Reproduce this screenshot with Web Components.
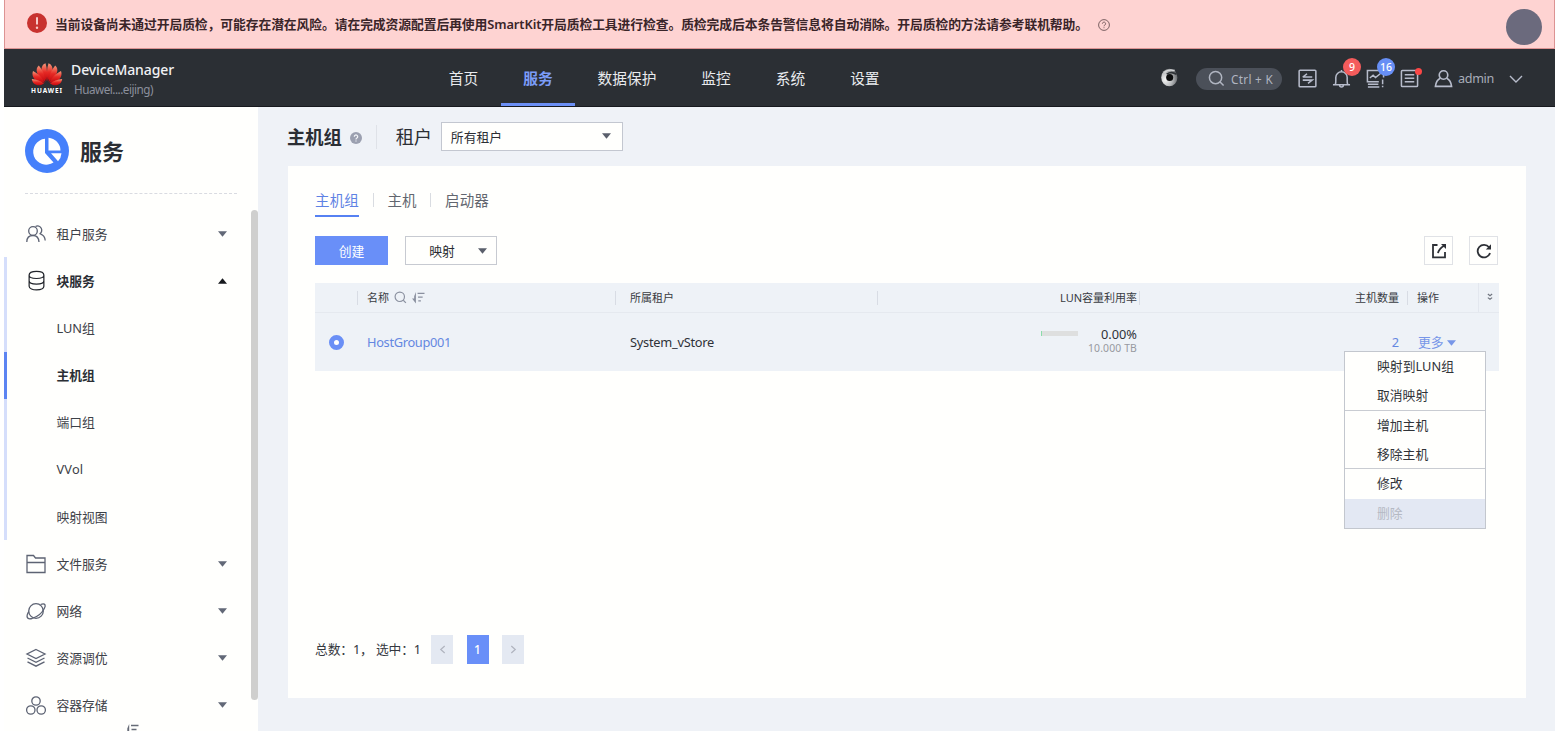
<!DOCTYPE html>
<html lang="zh-CN">
<head>
<meta charset="utf-8">
<title>DeviceManager</title>
<style>
html,body{margin:0;height:100%;background:#fff;overflow:hidden}
body{font-family:"Noto Sans","Noto Sans CJK SC",sans-serif;font-size:12.8px;color:#2e3138}
</style>
</head>
<body>
<device-app></device-app>
<script>
const define = (name, html, init) => {
  const t = document.createElement('template');
  t.innerHTML = html;
  customElements.define(name, class extends HTMLElement {
    connectedCallback() {
      if (this.shadowRoot) return;
      this.attachShadow({mode: 'open'}).append(t.content.cloneNode(true));
      if (init) init.call(this, this.shadowRoot);
    }
  });
};

/* Icon set: <ui-icon name size> */
const icons = {
  alert: ['0 0 20 20', '<circle cx="10" cy="10" r="10" fill="#c8322f" stroke="none"/><path d="M10 4.300v7.200" stroke="#f7c9c8" stroke-width="2"/><circle cx="10" cy="14.700" r="1.200" fill="#f7c9c8" stroke="none"/>'],
  help: ['0 0 12 12', '<circle cx="6" cy="6" r="5.4" fill="none" stroke="#6d5557" stroke-width=".9"/><path d="M4.4 4.7a1.6 1.6 0 1 1 2.5 1.3C6.200 6.400 6 6.700 6 7.300M6 8.300v.9" fill="none" stroke="#6d5557" stroke-width=".9"/>'],
  helpfill: ['0 0 12 12', '<circle cx="6" cy="6" r="6" fill="#9ba0b0" stroke="none"/><path d="M4.300 4.700a1.700 1.700 0 1 1 2.600 1.400C6.200 6.500 6 6.700 6 7.400M6 8.400v1.200" fill="none" stroke="#f4f6fa" stroke-width="1.200"/>'],
  eye: ['0 0 20 20', '<defs><radialGradient id="g" cx=".25" cy=".62" r=".85"><stop offset="0" stop-color="#f6f6f6"/><stop offset=".5" stop-color="#b9bbbd"/><stop offset="1" stop-color="#55585c"/></radialGradient></defs><ellipse cx="9.800" cy="10.500" rx="8.500" ry="9.200" fill="url(#g)" stroke="none"/><path d="M4.500 5.200Q8.500 1.500 15.500 3.200" stroke="#d5d7d8" stroke-width="1.600" fill="none"/><path d="M7 7Q12 3.800 17.500 7.200" stroke="#2f3337" stroke-width="1.800" fill="none"/><circle cx="10.200" cy="10.600" r="3.700" fill="#0c0d0e" stroke="none"/>'],
  search: ['0 0 18 18', '<circle cx="8" cy="8" r="6.500"/><path d="M12.800 12.800 16.500 16.500"/>'],
  swap: ['0 0 20 20', '<rect x="1.200" y="1.200" width="17.600" height="17.600" rx="1"/><path d="M5 8.500h10M9.500 5 5 8.500M5 11.700h10L10.500 15.200"/>'],
  bell: ['0 0 20 20', '<path d="M1 16.500h18M3.500 16.300C4.300 14.500 4 12 4 9a6 6 0 0 1 12 0c0 3 -.3 5.500.5 7.300M8 16.800c0 2.800 4 2.800 4 0M10 3V1"/>'],
  monitor: ['0 0 20 20', '<path d="M18.500 9V1.500h-17v12h12M4 9.500 7.500 6.500 10 9 15 5M2 16h11M2 19h12M17.500 11v5M17.500 17.500v1.800"/>'],
  list: ['0 0 20 20', '<rect x="1.500" y="1.500" width="17" height="17" rx="1"/><path d="M5 6h10M5 9.700h10M5 13.400h10"/>'],
  user: ['0 0 20 20', '<circle cx="10" cy="6.300" r="4.500"/><path d="M6.500 9.700C4 11 2 14 1.500 18.300h17C18 14 16 11 13.500 9.700"/>'],
  chev: ['0 0 14 8', '<path d="M1 1l6 6 6-6"/>'],
  users: ['0 0 20 20', '<circle cx="7" cy="7" r="4.300"/><path d="M.8 18C.8 13.500 3 11.500 7 11.500c3.600 0 5.700 2 6 6.500M9.500 2.500A4 4 0 1 1 13.500 10M14.500 10.200c2.800.8 4.500 3 4.700 6.300"/>'],
  disk: ['0 0 18 22', '<path d="M1.200 5.200c0-5.200 15.600-5.200 15.600 0v12c0 5-15.600 5-15.600 0zM1.200 5.500c0 4.500 15.600 4.500 15.600 0M1.200 11.300c0 4.700 15.600 4.700 15.600 0"/>'],
  folder: ['0 0 20 20', '<path d="M1 18.500V1.500h6.500l2 2.500H19v14.500zM1 8.500h18"/>'],
  planet: ['0 0 20 18', '<circle cx="10" cy="9" r="7.300"/><path d="M14.500 2.500C19.500.5 20 3.500 18.300 6.500 16 11 11 15 6 16.500.3 18 0 14 2.800 9.500"/>'],
  layers: ['0 0 20 20', '<path d="M10 1.500 19 6l-9 4.500L1 6zM1.500 10l8.500 4.300L18.500 10M1.500 13.800 10 18.200l8.500-4.400"/>'],
  rings: ['0 0 20 19', '<circle cx="10" cy="5" r="4.200"/><circle cx="4.800" cy="14" r="4.200"/><circle cx="15.200" cy="14" r="4.200"/>'],
  export: ['0 0 16 16', '<path d="M6.500 2H2v12.400h12V9M7 10.200C7.500 7.500 9.500 5 13 2.800"/><path d="M10 1h5v5z" fill="currentColor" stroke="none"/>'],
  refresh: ['0 0 16 16', '<path d="M13 4.300A6.300 6.300 0 1 0 14 10"/><path d="M15 1.300v5.200h-5.200z" fill="currentColor" stroke="none"/>'],
  sort: ['0 0 14 13', '<path d="M4.200 0V12.500L0 7h2.300V4.500z" fill="currentColor" stroke="none"/><path d="M6 1.500h7.500M6.500 5.500h5M6.800 9.700h2.800"/>'],
  dbl: ['0 0 7 9', '<path d="M1 1l2.500 2L6 1M1 5.200l2.500 2L6 5.200"/>'],
  left: ['0 0 8 10', '<path d="M6.500 1 2 5l4.500 4"/>'],
  right: ['0 0 8 10', '<path d="M1.500 1 6 5 1.500 9"/>'],
  down: ['0 0 10 6', '<path d="M0 0h10L5 6z" fill="currentColor" stroke="none"/>'],
  up: ['0 0 10 6', '<path d="M0 6h10L5 0z" fill="currentColor" stroke="none"/>'],
  pie: ['0 0 44 44', '<g stroke="none"><circle cx="22" cy="22" r="22" fill="#4580fb"/><path d="M20 9.800A13 13 0 1 0 28.500 33.500L20 24z" fill="#fff"/><path d="M23.500 8.800A13 13 0 0 1 35.500 21.500H23.500z" fill="#fff"/><path d="M26 24.300H36.500a13 13 0 0 1-3.500 8z" fill="#fff"/></g>'],
  flower: ['0 0 32 24', '<defs><linearGradient id="r" x2="0" y2="1"><stop offset="0" stop-color="#f59a7c"/><stop offset=".5" stop-color="#e62a25"/><stop offset="1" stop-color="#c3070e"/></linearGradient></defs><g fill="url(#r)" stroke="none"><path d="M15.500 18C9.500 11 8.500 2.500 14.500.3 16.400 6 16.400 12 15.500 18z"/><path d="M16.500 18C22.500 11 23.500 2.500 17.500.3 15.600 6 15.600 12 16.500 18z"/><path d="M14.500 19C5.500 13.500 3.500 6 7.800 2.500 12 7 14 13 14.500 19z"/><path d="M17.500 19c9-5.500 11-13 6.700-16.500C20 7 18 13 17.500 19z"/><path d="M13.700 19.700C3.500 19 0 13.500 2 8 8 11 11.500 15 13.700 19.700z"/><path d="M18.300 19.700C28.500 19 32 13.500 30 8 24 11 20.500 15 18.300 19.700z"/><path d="M13 20.500C7 24.500 1.500 21.500 .8 16 5.500 16.500 9.500 18 13 20.500z"/><path d="M19 20.500C25 24.500 30.500 21.500 31.200 16 26.500 16.500 22.500 18 19 20.500z"/></g>']
};
customElements.define('ui-icon', class extends HTMLElement {
  connectedCallback() {
    if (this.shadowRoot) return;
    const [vb, body] = icons[this.getAttribute('name')];
    const w = this.getAttribute('w') || 20, h = this.getAttribute('h') || w;
    this.attachShadow({mode: 'open'}).innerHTML = `<style>:host{display:block;flex:none;width:${w}px;height:${h}px}svg{display:block;overflow:visible}</style>
    <svg width="${w}" height="${h}" viewBox="${vb}" fill="none" stroke="currentColor" stroke-width="${this.getAttribute('sw') || 1.4}">${body}</svg>`;
  }
});

/* Single-line label tracked to a given width: <ui-text w="51"> */
define('ui-text', `<style>:host{display:block;flex:none;white-space:nowrap}span{display:inline-block}</style><span><slot></slot></span>`, function (root) {
  const w = +this.getAttribute('w');
  if (!w) return;
  const span = root.querySelector('span');
  const n = [...this.textContent].length;
  span.style.letterSpacing = (w - span.getBoundingClientRect().width) / n + 'px';
  this.style.width = w + 'px';
});

define('alert-banner', `<style>
:host{display:flex;box-sizing:border-box;height:49px;background:#fed3d2;border:solid #dc9393;border-width:0 1px 1px;align-items:center;padding:0 12px 0 22px;color:#3a2529;font-weight:600}
ui-text{margin:-2px 0 0 8px}.h{margin-left:10px;margin-top:2px}.a{width:36px;height:36px;border-radius:50%;background:#6b6a7d;margin-left:auto;margin-top:6px}.i{margin-top:-2px}
</style><ui-icon class="i" name="alert" w="20"></ui-icon><ui-text w="1033">当前设备尚未通过开局质检，可能存在潜在风险。请在完成资源配置后再使用SmartKit开局质检工具进行检查。质检完成后本条告警信息将自动消除。开局质检的方法请参考联机帮助。</ui-text><ui-icon class="h" name="help" w="12"></ui-icon><div class="a"></div>`);

define('nav-item', `<style>
:host{display:flex;align-items:center;padding:0 22.500px;font-size:14.700px;color:#e9ebee;box-sizing:border-box;border-bottom:3px solid transparent;border-top:2px solid transparent}
:host([active]){color:#7b9cf8;font-weight:700;border-bottom-color:#6b8ff5}
</style><slot></slot>`);

define('count-badge', `<style>:host{position:absolute;min-width:18px;height:18px;border-radius:9px;background:var(--c);color:#fff;font-size:10.500px;line-height:18px;text-align:center;font-weight:500}</style><slot></slot>`);

define('top-header', `<style>
:host{display:flex;height:58px;background:#2b2f34;color:#b8bdc9;border-bottom:1px solid #17191e;box-sizing:border-box}
.logo{width:32px;margin:14px 0 0 27px;text-align:center;color:#fff;font:bold 6.500px/8px "Noto Sans",sans-serif}
.t{margin-left:8px;padding-top:11px}.t b{display:block;font-weight:500;font-size:14px;line-height:20px;color:#f1f2f4}.t i{display:block;font-style:normal;font-size:11.700px;line-height:18px;margin-left:3px;color:#8b909d}
.logo-box{display:flex;width:422.300px;flex:none}
nav{display:flex}
.r{display:flex;align-items:center;margin-left:auto;padding:2px 32px 0 0;color:#b7bccb}
.r>ui-icon:first-child{margin-top:-3px}
.pill{display:flex;align-items:center;box-sizing:border-box;width:86px;height:22px;border-radius:11px;background:#4b5059;margin:0 16px 0 17px;padding-left:12px;font-size:11.700px;color:#b0b5c1}
.pill ui-text{margin-left:6px}.w{position:relative;margin-right:15px}.dot{position:absolute;right:-3px;top:-1px;width:7px;height:7px;border-radius:50%;background:#fb4746}
.adm{font-size:12.600px;color:#a8adb9;margin:-1px 15px 0 5px}
</style>
<div class="logo-box"><div class="logo"><ui-icon name="flower" w="32" h="24"></ui-icon><ui-text w="32">HUAWEI</ui-text></div><div class="t"><b><ui-text w="103">DeviceManager</ui-text></b><i><ui-text w="79">Huawei....eijing)</ui-text></i></div></div>
<nav><nav-item>首页</nav-item><nav-item active>服务</nav-item><nav-item>数据保护</nav-item><nav-item>监控</nav-item><nav-item>系统</nav-item><nav-item>设置</nav-item></nav>
<div class="r"><ui-icon name="eye" w="19" h="20"></ui-icon><div class="pill"><ui-icon name="search" w="17" sw="1.6"></ui-icon><ui-text w="42">Ctrl + K</ui-text></div>
<div class="w"><ui-icon name="swap" w="19" sw="1.6"></ui-icon></div><div class="w"><ui-icon name="bell" w="19" sw="1.6"></ui-icon><count-badge style="--c:#f45c5c;left:11px;top:-11px">9</count-badge></div><div class="w"><ui-icon name="monitor" w="19" sw="1.6"></ui-icon><count-badge style="--c:#678ff5;left:11px;top:-11px">16</count-badge></div><div class="w"><ui-icon name="list" w="19" sw="1.6"></ui-icon><span class="dot"></span></div>
<ui-icon name="user" w="19" sw="1.7"></ui-icon><ui-text class="adm" w="36">admin</ui-text><ui-icon name="chev" w="14" h="8"></ui-icon></div>`);

define('side-item', `<style>
:host{display:flex;align-items:center;height:47.200px;box-sizing:border-box;padding:0 31px 0 19px;border-left:3px solid transparent;color:#3d4148}
:host([group]){border-left-color:#d5defb}:host([active]){border-left-color:#5c84f2}:host([strong]){font-weight:700;color:#2b2e34}
.i{width:20px;display:flex;justify-content:center;color:#5d6373;margin-right:10.400px}:host([strong]) .i{color:#22252b}
.c{margin-left:auto;color:#626877}:host([strong]) .c{color:#17191e}.x{margin-top:-1px}
</style><span class="i"></span><span class="x"><slot></slot></span><span class="c"></span>`, function (r) {
  const ic = this.getAttribute('icon');
  if (!ic) return;
  const dims = {disk: [17, 21], planet: [20, 18], rings: [20, 19]}[ic] || [20, 20];
  r.querySelector('.i').innerHTML = `<ui-icon name="${ic}" w="${dims[0]}" h="${dims[1]}" sw="1.3"></ui-icon>`;
  r.querySelector('.c').innerHTML = `<ui-icon name="${this.hasAttribute('open') ? 'up' : 'down'}" w="9" h="6"></ui-icon>`;
});

define('side-bar', `<style>
:host{display:block;position:relative;width:254px;background:#fffffd;overflow:hidden}
.t{display:flex;align-items:center;height:87px;margin:0 21px;box-sizing:border-box;border-bottom:1px dashed #d9dbe1;font-size:22px;font-weight:600;color:#2b2e34;padding-top:1px}
.t ui-text{margin:-2px 0 0 11px}.l{padding-top:16px}
.s{position:absolute;right:0;top:103px;width:7px;height:490px;border-radius:4px;background:#cfcfce}
.f{position:absolute;left:121px;top:617px;color:#666b77}
</style><div class="t"><ui-icon name="pie" w="44"></ui-icon><ui-text w="44">服务</ui-text></div>
<div class="l"><side-item icon="users">租户服务</side-item><side-item icon="disk" open group strong>块服务</side-item><side-item group>LUN组</side-item><side-item group active strong>主机组</side-item><side-item group>端口组</side-item><side-item group><ui-text w="27">VVol</ui-text></side-item><side-item group>映射视图</side-item><side-item icon="folder">文件服务</side-item><side-item icon="planet">网络</side-item><side-item icon="layers">资源调优</side-item><side-item icon="rings">容器存储</side-item></div>
<div class="s"></div><ui-icon class="f" name="sort" w="14" h="13"></ui-icon>`);

define('page-title', `<style>
:host{display:flex;align-items:center;height:59px;box-sizing:border-box;padding-left:29px;color:#2b2e34;font-size:18.300px}
b{font-weight:600;margin-top:-2px}.p{margin-top:-2px}ui-icon{margin:2px 0 0 8px}.d{width:1px;height:24px;background:#dfe2e8;margin:0 19px 0 14px}
.sel{display:flex;align-items:center;justify-content:space-between;box-sizing:border-box;width:182px;height:29px;border:1px solid #c3c7d0;background:#fffffd;margin-left:9px;padding:0 11px 0 9px;font-size:12.800px}.sel ui-icon{margin:-1px 0 0;color:#5a5f6b}
</style><b>主机组</b><ui-icon name="helpfill" w="12"></ui-icon><span class="d"></span><ui-text class="p" w="36">租户</ui-text><div class="sel">所有租户<ui-icon name="down" w="9" h="6"></ui-icon></div>`);

define('tab-bar', `<style>
:host{display:flex;align-items:flex-start;height:36px;font-size:14.500px;line-height:20px;color:#62666f}
.a{color:#5e82e4;border-bottom:2px solid #5681f2;padding-bottom:5px}.d{width:1px;height:14px;background:#d9dce1;margin:3px 14px 0 13.500px}
</style><ui-text class="a" w="44">主机组</ui-text><span class="d"></span><ui-text w="29">主机</ui-text><span class="d"></span><ui-text w="44">启动器</ui-text>`);

define('tool-bar', `<style>
:host{display:flex;align-items:center;height:29px}
.b,.m,.q{box-sizing:border-box;height:29px;display:flex;align-items:center;justify-content:center}
.b{width:73px;background:#698ff8;color:#fff}.m{width:92px;margin-left:17px;border:1px solid #c7cad1;gap:23px;padding-left:14px;color:#292c32}.m ui-icon{color:#5a5f6b}
.q{width:29px;border:1px solid #e0e2e6;color:#2d3036;margin-left:16px}.q.e{margin-left:auto}:host .q:last-child{margin-right:1px}
</style><div class="b">创建</div><div class="m">映射<ui-icon name="down" w="9" h="6"></ui-icon></div><div class="q e"><ui-icon name="export" w="16" sw="1.8"></ui-icon></div><div class="q"><ui-icon name="refresh" w="16" sw="1.8"></ui-icon></div>`);

define('host-table', `<style>
:host{display:block;margin-top:18px;background:#eef2f7}
.r{display:grid;grid-template-columns:43px 258px 262px 262px 268px 71px 20px;align-items:center}
.h{height:30px;box-sizing:border-box;border-bottom:1px solid #e5e9ef;font-size:11px;color:#383b42}
.h>div{display:flex;align-items:center;height:14px;border-right:1px solid #d8dce4;padding-left:9px}
.h ui-text{margin-top:-2px}
.h>.end{justify-content:flex-end;padding-right:2px}.h>div:nth-child(6){height:29px;border-color:#e3e7ee}.h>div:last-child{border:0;padding:0;justify-content:center}
.h>div:nth-child(3){padding-left:14px}
.h ui-icon{margin-left:5px;color:#8a909f}.h>div:last-child ui-icon{margin:-1px 0 0 2px;color:#70757f}
.v{height:58px}.v>div{padding-left:9px}.rad{width:15px;height:15px;box-sizing:border-box;border:5px solid #6a8ff6;border-radius:50%;background:#fff;margin-left:5px}
.v .u{display:flex;justify-content:flex-end;padding:0 3px 2px 0}.bar{width:37px;height:5px;background:#dedfdf;box-shadow:inset 1px 0 #8bdcab;margin:4px 10px 0 0}.p{width:49px;text-align:right;line-height:14px}.p ui-text{margin-left:auto}.p small{display:block;font-size:10.400px;color:#9799a0}
.k{color:#6487e1}.v .n{text-align:right;padding:0 9px 0 0}.m{display:flex;align-items:center;gap:3px;color:#7796e8;margin:-1px 0 0 1px}.m ui-icon{margin-top:3px}
</style>
<div class="r h"><div></div><div><ui-text w="22">名称</ui-text><ui-icon name="search" w="13" sw="1.6"></ui-icon><ui-icon name="sort" w="13" h="12"></ui-icon></div><div><ui-text w="44">所属租户</ui-text></div><div class="end"><ui-text w="77">LUN容量利用率</ui-text></div><div class="end" style="padding-right:8px"><ui-text w="44">主机数量</ui-text></div><div><ui-text w="22">操作</ui-text></div><div><ui-icon name="dbl" w="6" h="8"></ui-icon></div></div>
<div class="r v"><div><div class="rad"></div></div><div class="k"><ui-text w="84">HostGroup001</ui-text></div><div style="padding-left:14px"><ui-text w="84">System_vStore</ui-text></div><div class="u"><div class="bar"></div><div class="p"><ui-text w="36">0.00%</ui-text><small><ui-text w="49">10.000 TB</ui-text></small></div></div><div class="n k">2</div><div class="m">更多<ui-icon name="down" w="9" h="6"></ui-icon></div><div></div></div>`);

define('action-menu', `<style>
:host{position:absolute;left:1056px;top:185px;width:142px;height:178px;box-sizing:border-box;border:1px solid #c3c7ce;background:#fffffd;color:#303338}
div{display:flex;align-items:center;height:29.330px;box-sizing:border-box;padding:0 0 2px 32px}.l{border-bottom:1px solid #c9ccd2}.x{background:#e3e8f3;color:#b5b9c3}
</style><div><ui-text w="77">映射到LUN组</ui-text></div><div class="l">取消映射</div><div>增加主机</div><div class="l">移除主机</div><div>修改</div><div class="x">删除</div>`);

define('page-bar', `<style>
:host{display:flex;align-items:center;margin-top:auto;height:30px;color:#35383e}
.p{display:flex;align-items:center;justify-content:center;width:22px;height:29px;background:#e4e9f2;color:#b0b4bf;margin-right:13.500px}.c{background:#698ff8;color:#fff;font-weight:500;font-size:12px}
ui-text{margin:-2px 10px 0 0}
</style><ui-text w="106">总数：1，&nbsp;选中：1</ui-text><div class="p"><ui-icon name="left" w="7" h="9"></ui-icon></div><div class="p c">1</div><div class="p"><ui-icon name="right" w="7" h="9"></ui-icon></div>`);

define('content-card', `<style>
:host{display:flex;flex-direction:column;position:relative;box-sizing:border-box;height:532px;margin:0 29px 0 30px;padding:24px 27px 34px;background:#fffffd}
tool-bar{margin-top:10px}
</style><tab-bar></tab-bar><tool-bar></tool-bar><host-table></host-table><page-bar></page-bar><action-menu></action-menu>`);

define('device-app', `<style>
:host{display:flex;flex-direction:column;box-sizing:border-box;height:731px;padding-left:4px;overflow:hidden}
.b{display:flex;flex:1;min-height:0}main{flex:1;background:#eff2f7}
</style><alert-banner></alert-banner><top-header></top-header><div class="b"><side-bar></side-bar><main><page-title></page-title><content-card></content-card></main></div>`);
</script>
</body>
</html>
